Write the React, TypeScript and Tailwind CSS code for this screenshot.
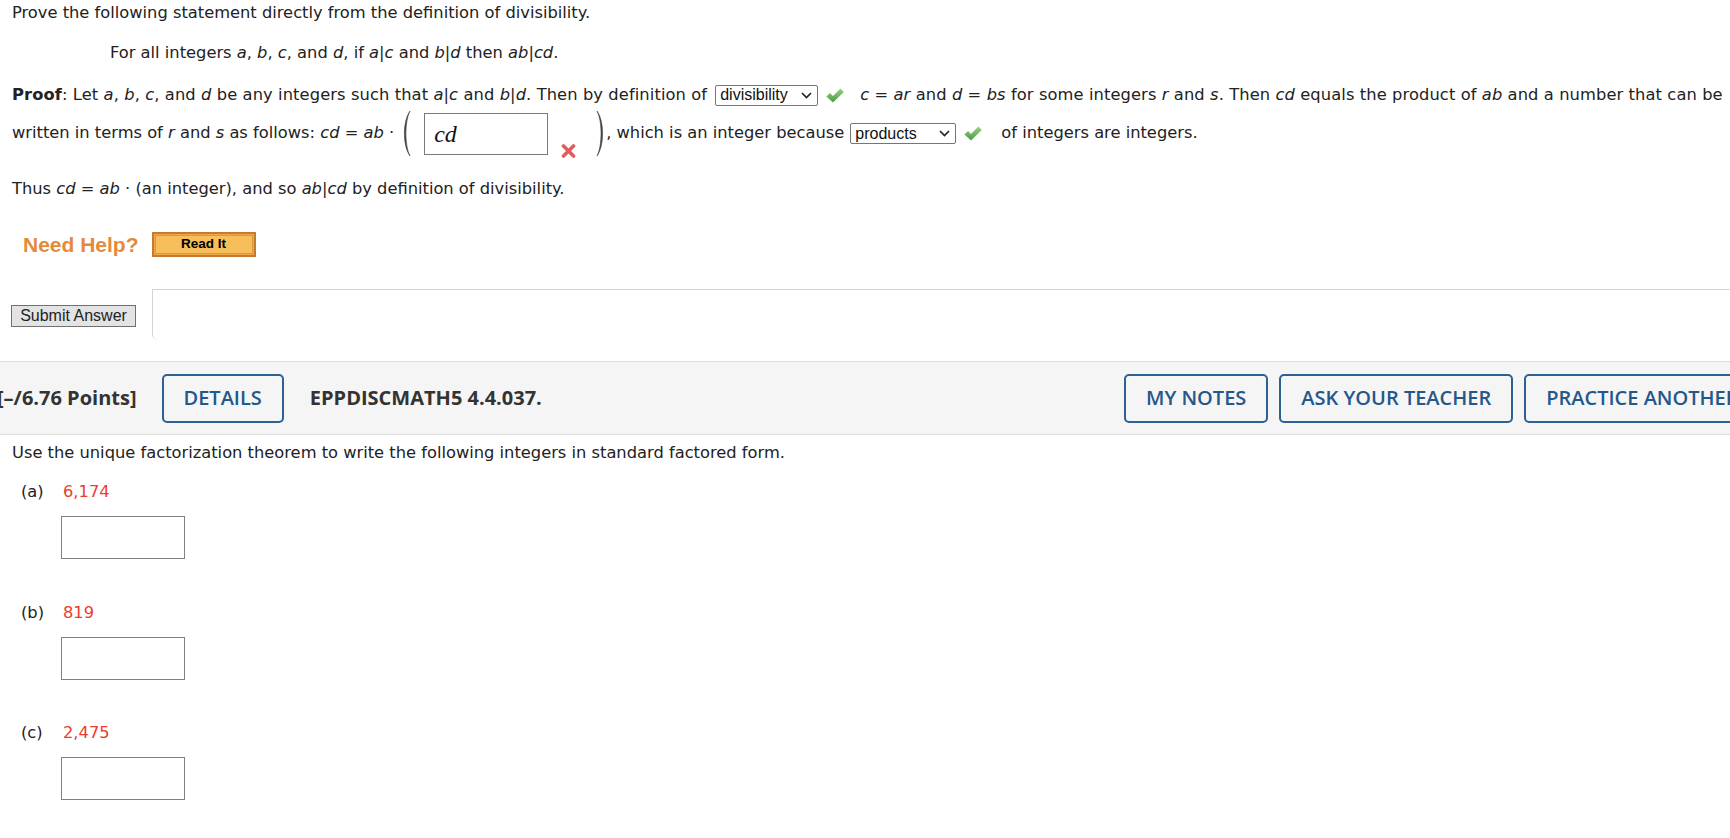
import React from "react"

const q = "font-['DejaVu_Sans',Verdana,sans-serif] text-[16.3px] text-[#222]"

function Check() {
  return (
    <svg width="18" height="15" viewBox="0 0 18 15" className="shrink-0">
      <defs>
        <linearGradient id="ck" x1="0" y1="0" x2="0" y2="1">
          <stop offset="0" stopColor="#94d37f" />
          <stop offset="1" stopColor="#4c9944" />
        </linearGradient>
      </defs>
      <path d="M0.4 8.4 L4 5 L7 8 L14.4 0.6 L17.8 4 L7 14.6 Z" fill="url(#ck)" />
    </svg>
  )
}

function Cross() {
  return (
    <svg width="15" height="14" viewBox="0 0 15 14" className="shrink-0">
      <path d="M2.5 2 L12.5 12 M12.5 2 L2.5 12" stroke="#e15c5c" strokeWidth="3.6" strokeLinecap="round" />
    </svg>
  )
}

function Paren({ right }: { right?: boolean }) {
  return (
    <svg width="10" height="47" viewBox="0 0 10 47" className={right ? "shrink-0 -scale-x-100" : "shrink-0"}>
      <path d="M9 1 C1.5 11 1.5 36 9 46 C3.6 36 3.6 11 9 1 Z" fill="#444" stroke="#444" strokeWidth="0.6" />
    </svg>
  )
}

function FakeSelect({ value, width }: { value: string; width: string }) {
  return (
    <div className={`${width} h-[21px] border border-[#767676] rounded-[2px] bg-white flex items-center justify-between pl-[4px] pr-[5px] font-['Liberation_Sans',Arial,sans-serif] text-[16px] text-[#111] shrink-0`}>
      <span>{value}</span>
      <svg width="11" height="7" viewBox="0 0 11 7">
        <path d="M1 1 L5.5 5.5 L10 1" stroke="#222" strokeWidth="1.7" fill="none" />
      </svg>
    </div>
  )
}

function I({ children }: { children: React.ReactNode }) {
  return <i className="italic">{children}</i>
}

function HeadButton({ label }: { label: string }) {
  return (
    <div className="h-[49px] px-[20px] border-2 border-[#2d6193] rounded-[5px] flex items-center text-[20px] font-semibold text-[#24578a] whitespace-nowrap shrink-0">
      {label}
    </div>
  )
}

function Part({ tag, num }: { tag: string; num: string }) {
  return (
    <div>
      <div className={`h-[26px] flex items-center pl-[21px] ${q}`}>
        <span className="w-[42px]">{tag}</span>
        <span className="text-[#ee3b2f]">{num}</span>
      </div>
      <div className="ml-[61px] mt-[11px] w-[124px] h-[43px] border border-[#808080] bg-white" />
    </div>
  )
}

export default function App() {
  return (
    <div className="w-[1730px] h-[838px] overflow-hidden bg-white">
      <div className={`${q} pl-[12px] whitespace-nowrap`}>
        <div className="h-[26px] flex items-center">
          <span>Prove the following statement directly from the definition of divisibility.</span>
        </div>

        <div className="h-[26px] mt-[14px] pl-[98px] flex items-center">
          <span>
            For all integers <I>a</I>, <I>b</I>, <I>c</I>, and <I>d</I>, if <I>a</I>|<I>c</I> and <I>b</I>|<I>d</I> then <I>ab</I>|<I>cd</I>.
          </span>
        </div>

        {/* proof line 1 */}
        <div className="h-[26px] mt-[16px] flex items-center">
          <span className="tracking-[0.1px]">
            <b className="font-bold">Proof</b>: Let <I>a</I>, <I>b</I>, <I>c</I>, and <I>d</I> be any integers such that <I>a</I>|<I>c</I> and <I>b</I>|<I>d</I>. Then by definition of
          </span>
          <div className="ml-[8px]"><FakeSelect value="divisibility" width="w-[103px]" /></div>
          <div className="ml-[8px]"><Check /></div>
          <span className="ml-[16px] tracking-[0.1px]">
            <I>c</I> = <I>ar</I> and <I>d</I> = <I>bs</I> for some integers <I>r</I> and <I>s</I>. Then <I>cd</I> equals the product of <I>ab</I> and a number that can be
          </span>
        </div>

        {/* proof line 2 */}
        <div className="h-[51px] flex items-center">
          <span>
            written in terms of <I>r</I> and <I>s</I> as follows: <I>cd</I> = <I>ab</I> ·
          </span>
          <div className="ml-[7px] flex items-center h-[47px]">
            <Paren />
            <div className="ml-[13px] w-[124px] h-[42px] border border-[#7a7a7a] bg-white flex items-center pl-[9px] font-['Liberation_Serif','Times_New_Roman',serif] italic text-[24px] text-[#111]">
              cd
            </div>
            <div className="self-end mb-[-1px] ml-[13px]"><Cross /></div>
            <div className="ml-[20px]"><Paren right /></div>
          </div>
          <span>, which is an integer because</span>
          <div className="ml-[6px]"><FakeSelect value="products" width="w-[106px]" /></div>
          <div className="ml-[8px]"><Check /></div>
          <span className="ml-[19px]">of integers are integers.</span>
        </div>

        <div className="h-[26px] mt-[17px] flex items-center">
          <span>
            Thus <I>cd</I> = <I>ab</I> · (an integer), and so <I>ab</I>|<I>cd</I> by definition of divisibility.
          </span>
        </div>
      </div>

      {/* need help */}
      <div className="mt-[30px] h-[25px] flex items-center">
        <span className="ml-[23px] font-['Liberation_Sans',Arial,sans-serif] font-bold text-[21px] text-[#e58a3a]">
          Need Help?
        </span>
        <div className="ml-[13px] w-[104px] h-[25px] border-2 border-[#c9792d] bg-[#f3a94a] p-[1px]">
          <div className="w-full h-full border border-[#d99740] bg-[#f6bf5b] flex items-center justify-center font-['Liberation_Sans',Arial,sans-serif] font-bold text-[13.5px] text-black">
            Read It
          </div>
        </div>
      </div>

      {/* submit */}
      <div className="mt-[32px] h-[51px] flex items-center">
        <div className="ml-[11px] mt-[3px] w-[125px] h-[22px] border border-[#707070] bg-[#e3e3e3] flex items-center justify-center font-['Liberation_Sans',Arial,sans-serif] text-[16px] text-[#222]">
          Submit Answer
        </div>
        <div className="ml-[16px] flex-1 h-full border-l border-t border-[#d4d4d4] rounded-bl-[6px]" />
      </div>

      {/* question header band */}
      <div className="mt-[21px] h-[74px] bg-[#f5f5f5] border-y border-[#dcdcdc] flex items-center font-['Open_Sans','Noto_Sans',sans-serif]">
        <span className="ml-[-3px] text-[20px] font-bold text-[#333] whitespace-nowrap">[–/6.76 Points]</span>
        <div className="ml-[25px]"><HeadButton label="DETAILS" /></div>
        <span className="ml-[26px] text-[20px] font-bold text-[#333] whitespace-nowrap">EPPDISCMATH5 4.4.037.</span>
        <div className="ml-auto w-[606px] shrink-0 flex gap-[11px]">
          <HeadButton label="MY NOTES" />
          <HeadButton label="ASK YOUR TEACHER" />
          <HeadButton label="PRACTICE ANOTHER" />
        </div>
      </div>

      {/* next question */}
      <div className={`mt-[5px] h-[26px] pl-[12px] flex items-center whitespace-nowrap ${q}`}>
        <span>Use the unique factorization theorem to write the following integers in standard factored form.</span>
      </div>
      <div className="mt-[13px]">
        <Part tag="(a)" num="6,174" />
      </div>
      <div className="mt-[41px]">
        <Part tag="(b)" num="819" />
      </div>
      <div className="mt-[40px]">
        <Part tag="(c)" num="2,475" />
      </div>
    </div>
  )
}
